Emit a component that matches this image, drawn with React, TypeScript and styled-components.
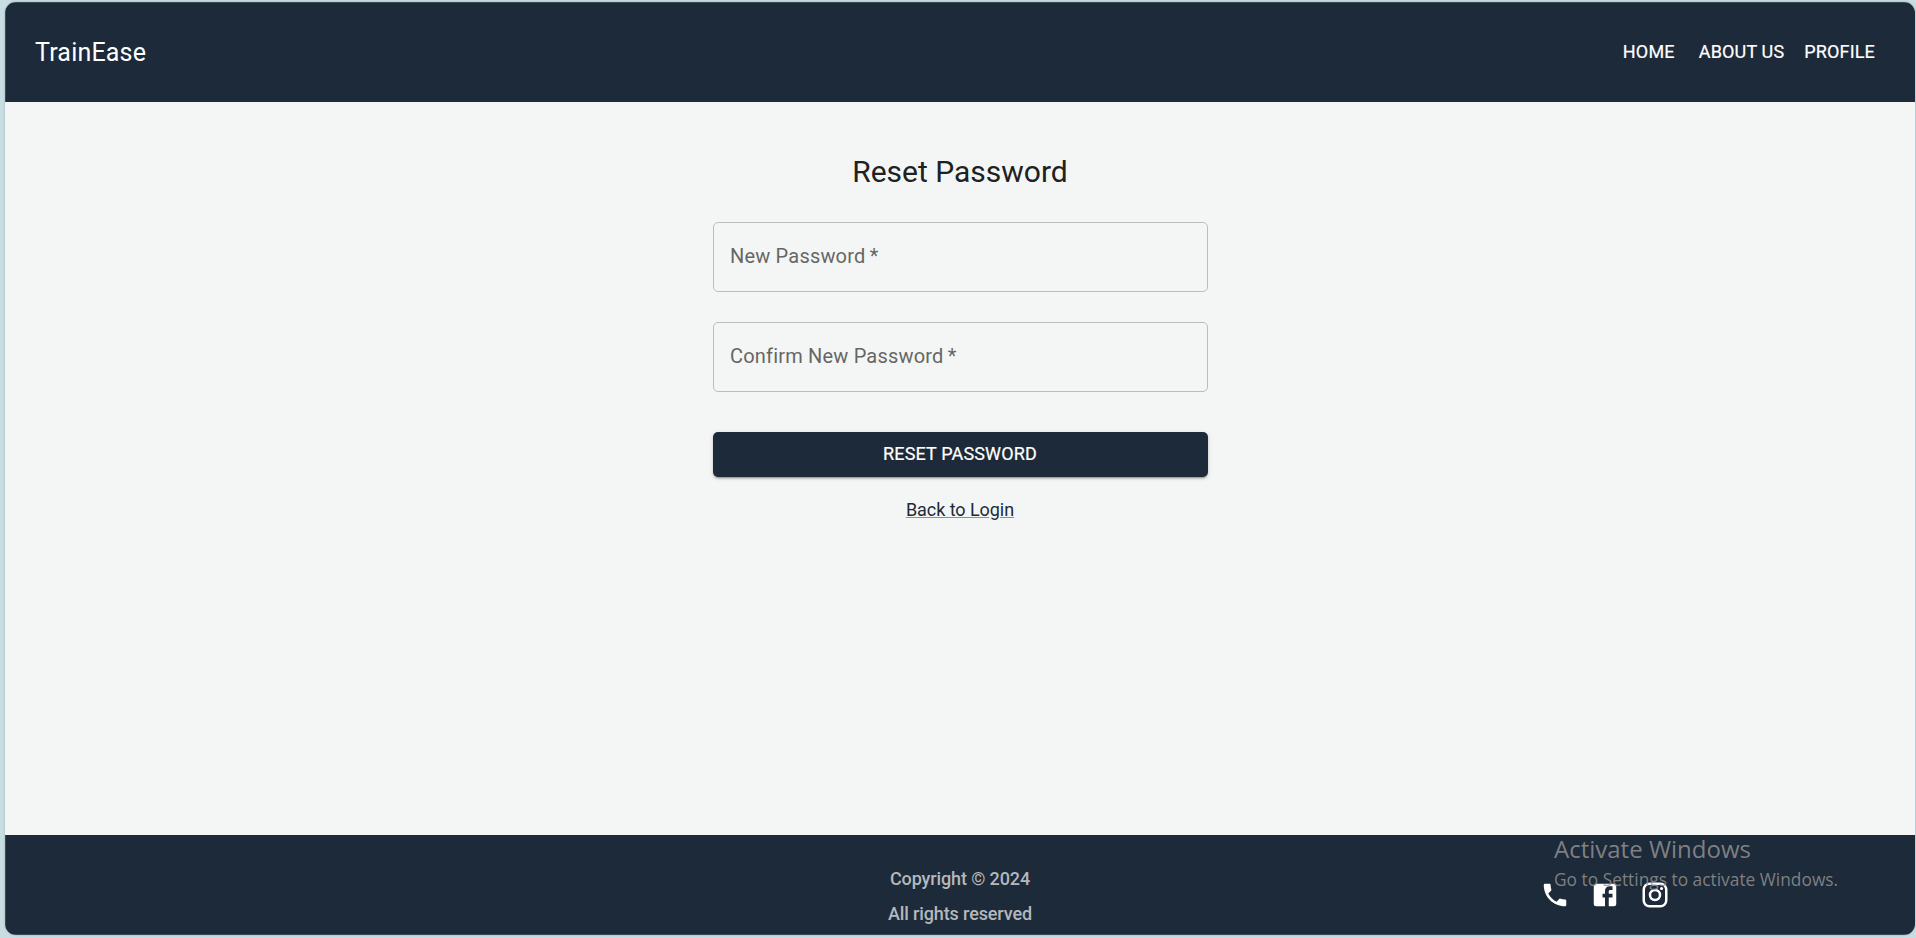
import React from 'react';
import styled, { createGlobalStyle } from 'styled-components';

const ink = '#1d2a39';

const GlobalStyle = createGlobalStyle`
  *, *::before, *::after { box-sizing: border-box; }
  body {
    margin: 0;
    background: #c7dde1;
    font-family: Roboto, 'Liberation Sans', sans-serif;
    overflow: hidden;
  }
`;

const Shell = styled.div`
  height: 938px;
  padding: 2px 1px 3px 5px;
`;

const Card = styled.div`
  height: 100%;
  display: flex;
  flex-direction: column;
  border-radius: 11px;
  overflow: hidden;
  background: #f4f6f5;
  box-shadow: 0 0 2px rgba(0, 0, 0, 0.25);
`;

const Header = styled.header`
  flex: none;
  height: 100px;
  padding: 2px 30px 0;
  display: flex;
  align-items: center;
  justify-content: space-between;
  background: ${ink};
  color: #fff;
  box-shadow: inset 1px 1px 0 rgba(199, 221, 225, 0.18);
`;

const Brand = styled.div`
  font-size: 25px;
  line-height: 40px;
  letter-spacing: 0.0075em;
`;

const Nav = styled.nav`
  display: flex;
  margin-top: -2px;
`;

const NavButton = styled.button`
  min-width: 80px;
  padding: 7.5px 10px;
  border: 0;
  background: none;
  color: inherit;
  font: 400 18px/30.6px Roboto, sans-serif;
  letter-spacing: 0.16px;
  -webkit-text-stroke: 0.2px currentColor;
  text-transform: uppercase;
`;

const Main = styled.main`
  flex: 1;
  display: flex;
  flex-direction: column;
  align-items: center;
  padding-top: 50px;
`;

const Form = styled.form`
  width: 495px;
  display: flex;
  flex-direction: column;
  align-items: center;
`;

const Title = styled.h1`
  margin: 0 0 30px;
  font-weight: 400;
  font-size: 30px;
  line-height: 40px;
  color: #202122;
`;

const Field = styled.label`
  width: 100%;
  height: 70px;
  margin-bottom: 30px;
  padding: 0 16.5px 2px;
  display: flex;
  align-items: center;
  border: 1px solid #bbbdbc;
  border-radius: 5px;
  font-size: 20px;
  line-height: 28px;
  letter-spacing: 0.00938em;
  color: #666;
`;

const Submit = styled.button`
  width: 100%;
  height: 45px;
  margin: 10px 0 17px;
  padding: 0;
  border: 0;
  border-radius: 5px;
  background: ${ink};
  color: #fff;
  font: 400 18px/30.6px Roboto, sans-serif;
  letter-spacing: 0.16px;
  -webkit-text-stroke: 0.2px currentColor;
  text-transform: uppercase;
  box-shadow: 0 3px 1px -2px rgba(0, 0, 0, 0.2), 0 2px 2px rgba(0, 0, 0, 0.14),
    0 1px 5px rgba(0, 0, 0, 0.12);
`;

const BackLink = styled.a`
  font-size: 18px;
  line-height: 32px;
  letter-spacing: -0.05px;
  color: ${ink};
  text-decoration: underline;
  text-decoration-color: rgba(29, 41, 57, 0.5);
`;

const Footer = styled.footer`
  position: relative;
  flex: none;
  height: 100px;
  padding: 26px 30px 0;
  display: grid;
  grid-template-columns: 1fr 1fr 1fr;
  background: ${ink};
  box-shadow: inset 1px -1px 0 rgba(199, 221, 225, 0.18);
`;

const Legal = styled.div`
  grid-column: 2;
  text-align: center;
  font-size: 18px;
  font-weight: 500;
  line-height: 35px;
  letter-spacing: -0.12px;
  color: #b4b8bc;
`;

const Social = styled.div`
  display: flex;
  justify-content: center;
  gap: 20px;
  padding: 19px 0 0 56px;
`;

const Icon = styled.svg`
  width: 30px;
  height: 30px;
  fill: #fff;
`;

const Watermark = styled.div`
  position: absolute;
  left: 1549px;
  top: -3px;
  font-family: 'Open Sans', 'Noto Sans', sans-serif;
  color: rgba(145, 145, 145, 0.85);
  white-space: nowrap;
`;

const WatermarkTitle = styled.div`
  font-size: 24px;
  line-height: 34px;
`;

const WatermarkNote = styled.div`
  font-size: 17.35px;
  line-height: 26px;
`;

const icons = [
  'M6.62 10.79c1.44 2.83 3.76 5.14 6.59 6.59l2.2-2.2c.27-.27.67-.36 1.02-.24 1.12.37 2.33.57 3.57.57.55 0 1 .45 1 1V20c0 .55-.45 1-1 1-9.39 0-17-7.61-17-17 0-.55.45-1 1-1h3.5c.55 0 1 .45 1 1 0 1.25.2 2.45.57 3.57.11.35.03.74-.25 1.02l-2.2 2.2z',
  'M5 3h14a2 2 0 0 1 2 2v14a2 2 0 0 1-2 2H5a2 2 0 0 1-2-2V5a2 2 0 0 1 2-2m13 2h-2.5A3.5 3.5 0 0 0 12 8.5V11h-2v3h2v7h3v-7h3v-3h-3V9a1 1 0 0 1 1-1h2V5z',
  'M7.8 2h8.4C19.4 2 22 4.6 22 7.8v8.4a5.8 5.8 0 0 1-5.8 5.8H7.8C4.6 22 2 19.4 2 16.2V7.8A5.8 5.8 0 0 1 7.8 2m-.2 2A3.6 3.6 0 0 0 4 7.6v8.8C4 18.39 5.61 20 7.6 20h8.8a3.6 3.6 0 0 0 3.6-3.6V7.6C20 5.61 18.39 4 16.4 4H7.6m9.65 1.5a1.25 1.25 0 0 1 1.25 1.25A1.25 1.25 0 0 1 17.25 8 1.25 1.25 0 0 1 16 6.75a1.25 1.25 0 0 1 1.25-1.25M12 7a5 5 0 0 1 5 5 5 5 0 0 1-5 5 5 5 0 0 1-5-5 5 5 0 0 1 5-5m0 2a3 3 0 0 0-3 3 3 3 0 0 0 3 3 3 3 0 0 0 3-3 3 3 0 0 0-3-3z',
];

export default function App() {
  return (
    <Shell>
      <GlobalStyle />
      <Card>
        <Header>
          <Brand>TrainEase</Brand>
          <Nav>
            <NavButton>Home</NavButton>
            <NavButton>About us</NavButton>
            <NavButton>Profile</NavButton>
          </Nav>
        </Header>
        <Main>
          <Form>
            <Title>Reset Password</Title>
            <Field>New Password&thinsp;*</Field>
            <Field>Confirm New Password&thinsp;*</Field>
            <Submit type="button">Reset Password</Submit>
            <BackLink>Back to Login</BackLink>
          </Form>
        </Main>
        <Footer>
          <Legal>
            <div>Copyright © 2024</div>
            <div>All rights reserved</div>
          </Legal>
          <Social>
            {icons.map((d) => (
              <Icon key={d} viewBox="0 0 24 24">
                <path d={d} />
              </Icon>
            ))}
          </Social>
          <Watermark>
            <WatermarkTitle>Activate Windows</WatermarkTitle>
            <WatermarkNote>Go to Settings to activate Windows.</WatermarkNote>
          </Watermark>
        </Footer>
      </Card>
    </Shell>
  );
}
